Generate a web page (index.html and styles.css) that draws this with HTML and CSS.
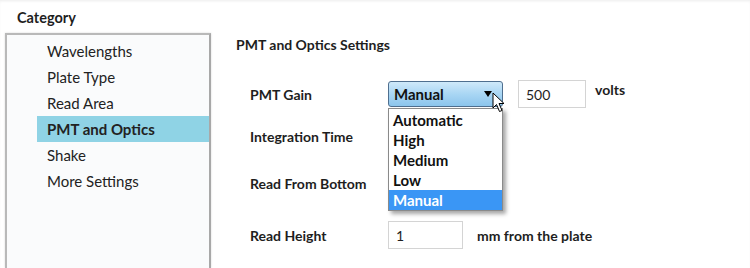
FILE: index.html
```html
<!DOCTYPE html>
<html lang="en">
<head>
    <meta charset="UTF-8">
    <meta name="viewport" content="width=device-width, initial-scale=1.0">
    <title>PMT and Optics</title>
    <link rel="stylesheet" href="styles.css">
</head>
<body>
    <div class="page">
        <div class="sidebar">
            <div class="category-title">Category</div>
            <ul class="category-list">
                <li class="category-item">Wavelengths</li>
                <li class="category-item">Plate Type</li>
                <li class="category-item">Read Area</li>
                <li class="category-item active">PMT and Optics</li>
                <li class="category-item">Shake</li>
                <li class="category-item">More Settings</li>
            </ul>
        </div>

        <div class="settings">
            <div class="settings-title">PMT and Optics Settings</div>

            <div class="setting-row row-gain">
                <div class="setting-label">PMT Gain</div>
                <div class="select-wrap">
                    <div class="select-box">
                        <span>Manual</span>
                        <span class="select-arrow"></span>
                    </div>
                    <ul class="select-options">
                        <li>Automatic</li>
                        <li>High</li>
                        <li>Medium</li>
                        <li>Low</li>
                        <li class="selected">Manual</li>
                    </ul>
                    <svg class="cursor" width="14" height="21" viewBox="0 0 14 21">
                        <path d="M1 1 L1 16 L4.5 12.5 L7.5 19.5 L10 18.5 L7 11.5 L12 11.5 Z" fill="#fff" stroke="#000" stroke-width="1" stroke-linejoin="round"/>
                    </svg>
                </div>
                <div class="text-input gain-input">500</div>
                <div class="unit unit-top">volts</div>
            </div>

            <div class="setting-row row-integration">
                <div class="setting-label">Integration Time</div>
            </div>

            <div class="setting-row row-bottom">
                <div class="setting-label">Read From Bottom</div>
            </div>

            <div class="setting-row row-height">
                <div class="setting-label">Read Height</div>
                <div class="text-input height-input">1</div>
                <div class="unit">mm from the plate</div>
            </div>
        </div>
    </div>
</body>
</html>
```

FILE: styles.css
```css
body {
    margin: 0;
    background-color: #fff;
    font-family: Lato, "Open Sans", sans-serif;
    color: #1e1e1e;
}

.page {
    display: flex;
    height: 268px;
    overflow: hidden;
    box-shadow: inset 0 2px 3px -1px rgba(0, 0, 0, 0.08);
}

.sidebar {
    width: 206px;
    padding-left: 5px;
    flex-shrink: 0;
}

.category-title {
    font-size: 14.5px;
    font-weight: bold;
    padding: 9px 0 0 12px;
    height: 33px;
    box-sizing: border-box;
}

.category-list {
    list-style: none;
    margin: 0;
    padding: 3px 0 0 30px;
    height: 235px;
    box-sizing: border-box;
    border: 2px solid #b9b9b9;
    border-bottom: none;
    border-right-color: #a8a8a8;
    background-color: #fafbfc;
    box-shadow: 0 0 2px rgba(0, 0, 0, 0.15);
}

.category-item {
    height: 26px;
    line-height: 26px;
    padding-left: 10px;
    font-size: 15px;
    color: #222;
}

.category-item.active {
    background-color: #8fd3e5;
    font-weight: bold;
}

.settings {
    padding: 36px 0 0 25px;
    flex: 1;
}

.settings-title {
    font-size: 14px;
    font-weight: bold;
    height: 18px;
    line-height: 18px;
}

.setting-row {
    display: flex;
    align-items: center;
    height: 28px;
    padding-left: 14px;
}

.row-gain {
    margin-top: 26px;
}

.row-integration {
    margin-top: 14px;
}

.row-bottom {
    margin-top: 19px;
}

.row-height {
    margin-top: 24px;
}

.setting-label {
    width: 138px;
    font-size: 14px;
    font-weight: bold;
}

.select-wrap {
    position: relative;
}

.select-box {
    display: flex;
    align-items: center;
    justify-content: space-between;
    width: 115px;
    height: 26px;
    box-sizing: border-box;
    padding: 0 10px 0 5px;
    border: 1px solid #4f6f8f;
    border-radius: 3px;
    background: linear-gradient(#cfe9fa, #a9d6f4 50%, #8cc5ec);
    font-size: 15px;
    font-weight: bold;
    color: #111;
}

.select-arrow {
    width: 0;
    height: 0;
    border-left: 4px solid transparent;
    border-right: 4px solid transparent;
    border-top: 6px solid #000;
}

.select-options {
    position: absolute;
    left: 0;
    top: 27px;
    width: 115px;
    box-sizing: border-box;
    margin: 0;
    padding: 1px 0 0;
    list-style: none;
    background-color: #fff;
    border: 1px solid #8a8a8a;
    box-shadow: 3px 3px 4px rgba(0, 0, 0, 0.35);
    font-size: 15px;
    font-weight: bold;
    color: #111;
}

.select-options li {
    height: 20px;
    line-height: 20px;
    padding-left: 4px;
}

.select-options li.selected {
    background-color: #3a96f5;
    color: #fff;
}

.cursor {
    position: absolute;
    left: 104px;
    top: 11px;
}

.text-input {
    height: 28px;
    line-height: 28px;
    box-sizing: border-box;
    border: 1px solid #d4d4d4;
    padding-left: 7px;
    font-size: 14px;
    background-color: #fff;
}

.gain-input {
    width: 68px;
    margin-left: 15px;
}

.unit {
    font-size: 14px;
    font-weight: bold;
    margin-left: 14px;
}

.unit-top {
    margin-left: 9px;
    align-self: flex-start;
    margin-top: 1px;
}

.height-input {
    width: 75px;
}
```
